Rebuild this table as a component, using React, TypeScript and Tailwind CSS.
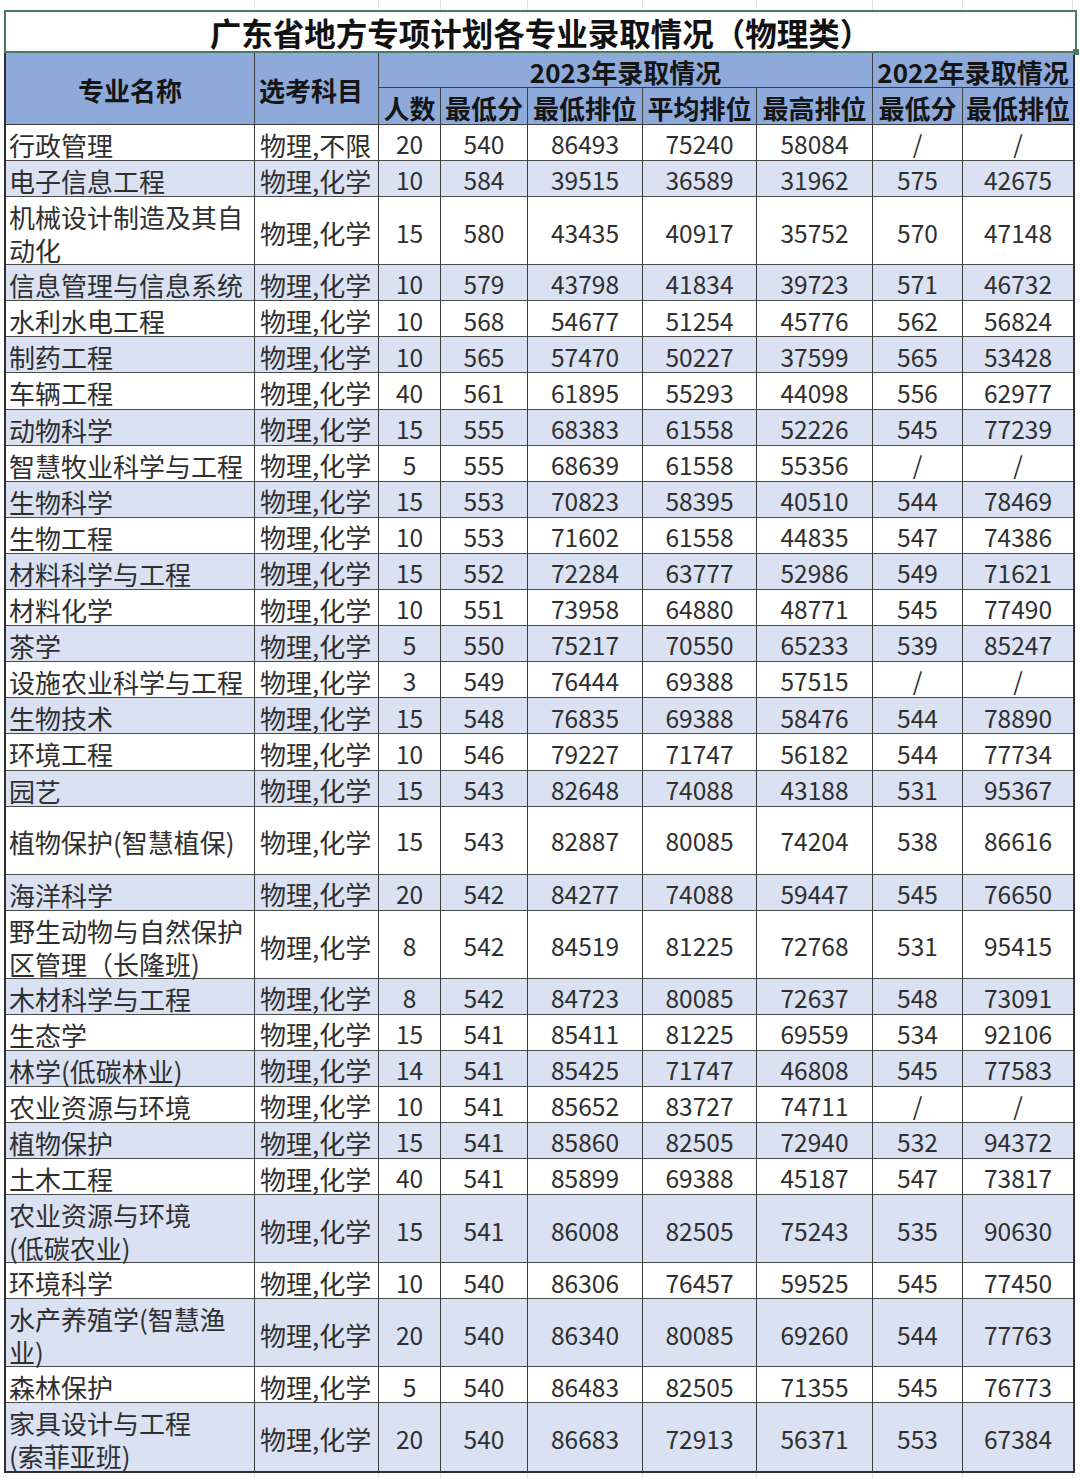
import clsx from "clsx";

const COLS =
  "grid grid-cols-[249px_124px_62px_87px_115px_114px_116px_90px_110px]";

type Row = {
  name: string;
  subject: string;
  values: string[];
  tall?: boolean;
};

const raw: [string, string, ...string[]][] = [
  ["行政管理", "物理,不限", "20", "540", "86493", "75240", "58084", "/", "/"],
  ["电子信息工程", "物理,化学", "10", "584", "39515", "36589", "31962", "575", "42675"],
  ["机械设计制造及其自\n动化", "物理,化学", "15", "580", "43435", "40917", "35752", "570", "47148"],
  ["信息管理与信息系统", "物理,化学", "10", "579", "43798", "41834", "39723", "571", "46732"],
  ["水利水电工程", "物理,化学", "10", "568", "54677", "51254", "45776", "562", "56824"],
  ["制药工程", "物理,化学", "10", "565", "57470", "50227", "37599", "565", "53428"],
  ["车辆工程", "物理,化学", "40", "561", "61895", "55293", "44098", "556", "62977"],
  ["动物科学", "物理,化学", "15", "555", "68383", "61558", "52226", "545", "77239"],
  ["智慧牧业科学与工程", "物理,化学", "5", "555", "68639", "61558", "55356", "/", "/"],
  ["生物科学", "物理,化学", "15", "553", "70823", "58395", "40510", "544", "78469"],
  ["生物工程", "物理,化学", "10", "553", "71602", "61558", "44835", "547", "74386"],
  ["材料科学与工程", "物理,化学", "15", "552", "72284", "63777", "52986", "549", "71621"],
  ["材料化学", "物理,化学", "10", "551", "73958", "64880", "48771", "545", "77490"],
  ["茶学", "物理,化学", "5", "550", "75217", "70550", "65233", "539", "85247"],
  ["设施农业科学与工程", "物理,化学", "3", "549", "76444", "69388", "57515", "/", "/"],
  ["生物技术", "物理,化学", "15", "548", "76835", "69388", "58476", "544", "78890"],
  ["环境工程", "物理,化学", "10", "546", "79227", "71747", "56182", "544", "77734"],
  ["园艺", "物理,化学", "15", "543", "82648", "74088", "43188", "531", "95367"],
  ["植物保护(智慧植保)", "物理,化学", "15", "543", "82887", "80085", "74204", "538", "86616"],
  ["海洋科学", "物理,化学", "20", "542", "84277", "74088", "59447", "545", "76650"],
  ["野生动物与自然保护\n区管理（长隆班)", "物理,化学", "8", "542", "84519", "81225", "72768", "531", "95415"],
  ["木材科学与工程", "物理,化学", "8", "542", "84723", "80085", "72637", "548", "73091"],
  ["生态学", "物理,化学", "15", "541", "85411", "81225", "69559", "534", "92106"],
  ["林学(低碳林业)", "物理,化学", "14", "541", "85425", "71747", "46808", "545", "77583"],
  ["农业资源与环境", "物理,化学", "10", "541", "85652", "83727", "74711", "/", "/"],
  ["植物保护", "物理,化学", "15", "541", "85860", "82505", "72940", "532", "94372"],
  ["土木工程", "物理,化学", "40", "541", "85899", "69388", "45187", "547", "73817"],
  ["农业资源与环境\n(低碳农业)", "物理,化学", "15", "541", "86008", "82505", "75243", "535", "90630"],
  ["环境科学", "物理,化学", "10", "540", "86306", "76457", "59525", "545", "77450"],
  ["水产养殖学(智慧渔\n业)", "物理,化学", "20", "540", "86340", "80085", "69260", "544", "77763"],
  ["森林保护", "物理,化学", "5", "540", "86483", "82505", "71355", "545", "76773"],
  ["家具设计与工程\n(索菲亚班)", "物理,化学", "20", "540", "86683", "72913", "56371", "553", "67384"],
];

const rows: Row[] = raw.map(([name, subject, ...values]) => ({
  name,
  subject,
  values,
  tall: name.includes("\n") || name === "植物保护(智慧植保)",
}));

// faint excel gridlines outside the table
function GridStrip({ h }: { h: string }) {
  return (
    <div className={clsx(COLS, h, "ml-[6px]")}>
      {Array.from({ length: 9 }).map((_, i) => (
        <div key={i} className="border-r border-[#e2e2e2]" />
      ))}
    </div>
  );
}

function HeadCell({
  children,
  className,
}: {
  children: React.ReactNode;
  className?: string;
}) {
  return (
    <div
      className={clsx(
        "flex items-center justify-center border-b border-[#3d3d3d] pt-[3px] font-bold text-[26px] leading-none text-[#151515]",
        className
      )}
    >
      {children}
    </div>
  );
}

export default function App() {
  return (
    <div className="w-[1080px] h-[1478px] overflow-hidden bg-white font-['Noto_Sans_CJK_SC',sans-serif]">
      <GridStrip h="h-[10px]" />

      {/* title (selected cell) */}
      <div className="relative ml-[4px] flex h-[43px] w-[1073px] items-center justify-center border-2 border-[#4b7a62] bg-white pt-[3px]">
        <span className="text-[31.5px] font-bold leading-none text-[#111]">
          广东省地方专项计划各专业录取情况（物理类）
        </span>
        <div className="absolute -bottom-[4px] -right-[4px] h-[6px] w-[6px] bg-[#4b7a62]" />
      </div>

      <div className="ml-[4px] w-[1071px] border-x-2 border-b-2 border-[#2e2e2e]">
        {/* header */}
        <div className={clsx(COLS, "grid-rows-[35px_37px] bg-[#8eaadb]")}>
          <HeadCell className="row-span-2 border-r">专业名称</HeadCell>
          <HeadCell className="row-span-2 border-r justify-start pl-[4px]">
            选考科目
          </HeadCell>
          <HeadCell className="col-span-5 border-r">2023年录取情况</HeadCell>
          <HeadCell className="col-span-2">2022年录取情况</HeadCell>
          <HeadCell className="border-r">人数</HeadCell>
          <HeadCell className="border-r">最低分</HeadCell>
          <HeadCell className="border-r">最低排位</HeadCell>
          <HeadCell className="border-r">平均排位</HeadCell>
          <HeadCell className="border-r">最高排位</HeadCell>
          <HeadCell className="border-r">最低分</HeadCell>
          <HeadCell>最低排位</HeadCell>
        </div>

        {/* body */}
        {rows.map((row, i) => (
          <div
            key={i}
            className={clsx(
              COLS,
              row.tall ? "h-[68px]" : "h-[36.1px]",
              i % 2 ? "bg-[#d9e1f2]" : "bg-white",
              i < rows.length - 1 && "border-b border-[#4a4a4a]",
              "text-[#2f2f2f]"
            )}
          >
            <div className="flex items-center border-r border-[#3d3d3d] pl-[3px] pt-[3px]">
              <span className="whitespace-pre-line text-[26px] leading-[33px]">
                {row.name}
              </span>
            </div>
            <div className="flex items-center border-r border-[#3d3d3d] pl-[5px] pt-[3px] text-[26px] leading-none">
              {row.subject}
            </div>
            {row.values.map((v, j) => (
              <div
                key={j}
                className={clsx(
                  "flex items-center justify-center pt-[3px] text-[24.5px] leading-none",
                  j < row.values.length - 1 && "border-r border-[#3d3d3d]"
                )}
              >
                {v}
              </div>
            ))}
          </div>
        ))}
      </div>

      <GridStrip h="h-[6px]" />
    </div>
  );
}
